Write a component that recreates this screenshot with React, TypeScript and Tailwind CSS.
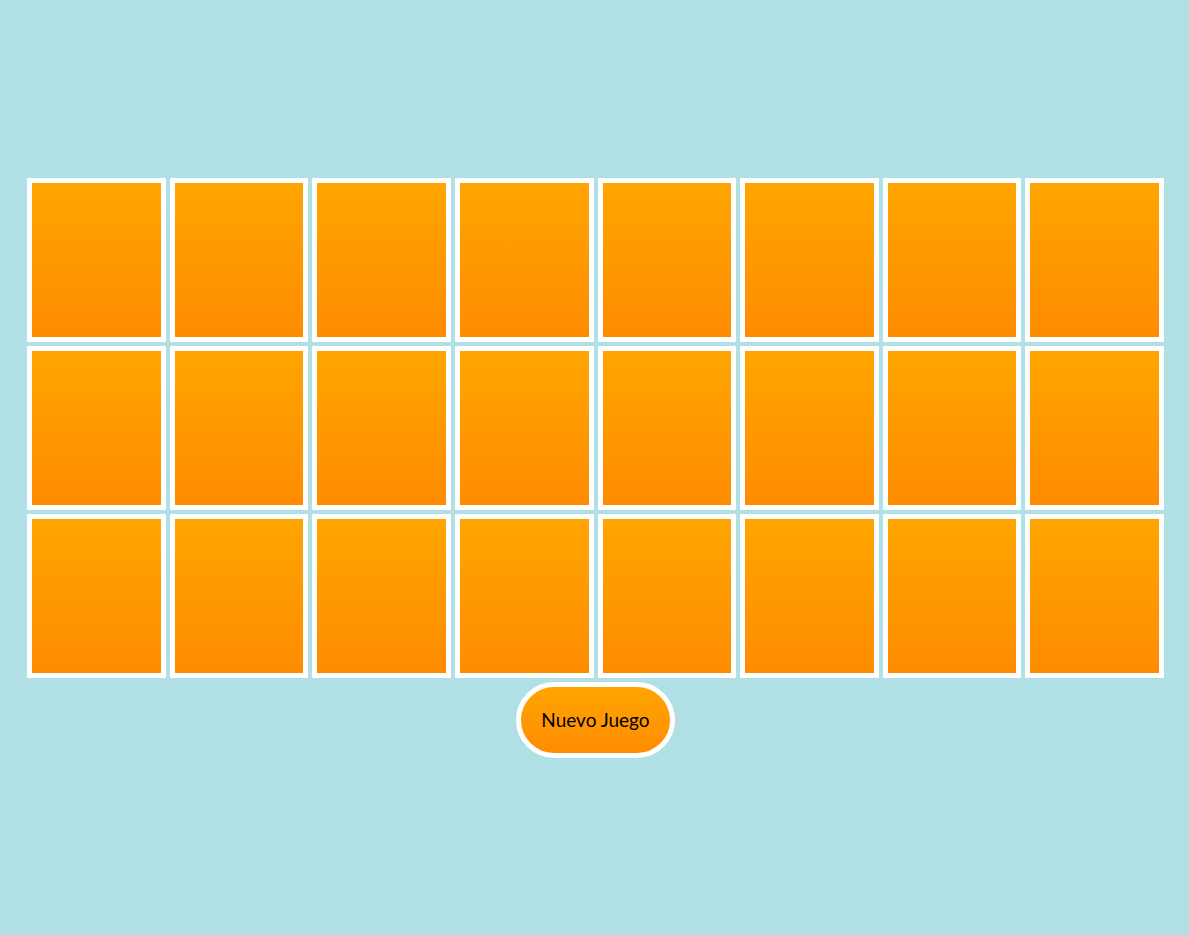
import React from "react";

export default function App() {
  const cards = Array.from({ length: 24 }, (_, i) => i);

  return (
    <div className="min-h-screen bg-[#b0e0e6] flex flex-col items-center justify-center font-['Lato','Open_Sans',sans-serif]">
      {/* BOARD */}
      <div className="w-[1137px] ml-[2px] grid grid-cols-8 gap-x-[4px] gap-y-[4px]">
        {cards.map((i) => (
          <div
            key={i}
            className="h-[164px] border-[5px] border-white bg-gradient-to-b from-[#ffa500] to-[#ff8c00]"
          />
        ))}
      </div>

      {/* BUTTON */}
      <button className="mt-[4px] ml-[2px] w-[159px] h-[76px] pt-[1px] rounded-full border-[5px] border-white bg-gradient-to-b from-[#ffa500] to-[#ff8c00] text-black text-[19px]">
        Nuevo Juego
      </button>
    </div>
  );
}
